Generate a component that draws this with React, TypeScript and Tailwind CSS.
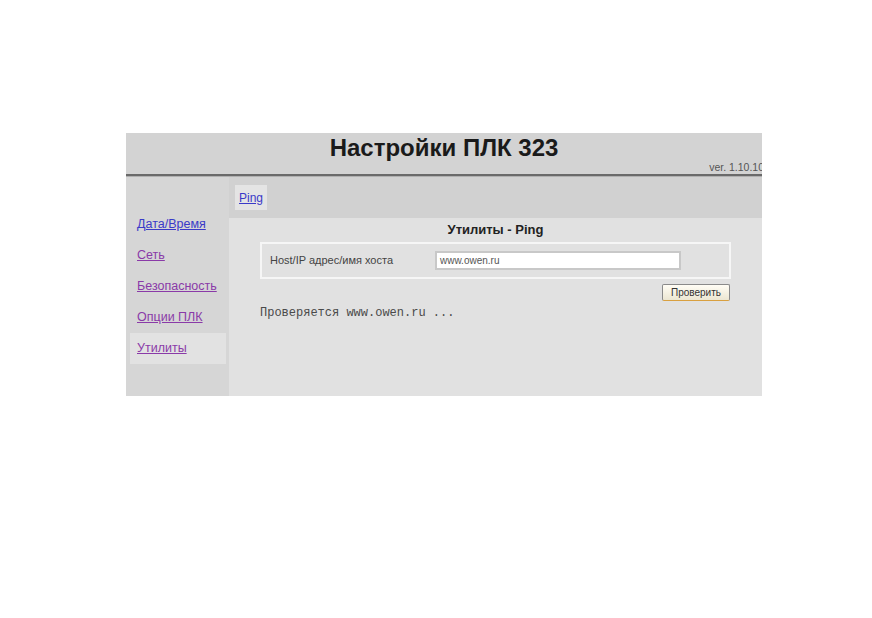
export default function App() {
  const links = [
    { label: "Дата/Время", color: "text-[#3a3ac8]" },
    { label: "Сеть", color: "text-[#8a3aa8]" },
    { label: "Безопасность", color: "text-[#8a3aa8]" },
    { label: "Опции ПЛК", color: "text-[#8a3aa8]" },
    { label: "Утилиты", color: "text-[#8a3aa8]", active: true },
  ];

  return (
    <div className="min-h-[618px] w-[872px] bg-white pt-[133px] pl-[126px] font-['Liberation_Sans',Arial,sans-serif]">
      <div className="flex w-[636px] flex-col">
        {/* header */}
        <div className="relative h-[41px] overflow-hidden bg-[#d3d3d3]">
          <div className="pt-[1px] text-center text-[24px] font-bold leading-[28px] text-[#1a1a1a]">
            Настройки ПЛК 323
          </div>
          <div className="absolute right-[-2px] bottom-[1px] text-[10.5px] leading-[12px] text-[#555]">
            ver. 1.10.10
          </div>
        </div>
        <div className="h-[2px] bg-[#6a6a6a]" />
        <div className="h-[1px] bg-[#b0b0b0]" />

        <div className="flex h-[219px]">
          {/* sidebar */}
          <div className="flex w-[103px] flex-col bg-[#d6d6d6] pt-[32px]">
            {links.map((l) => (
              <div
                key={l.label}
                className={`ml-[4px] mr-[3px] flex h-[31px] items-center pl-[7px] text-[12.5px] ${l.active ? "bg-[#e2e2e2]" : ""}`}
              >
                <a className={`${l.color} underline`} href="#">
                  {l.label}
                </a>
              </div>
            ))}
          </div>

          {/* main */}
          <div className="flex flex-1 flex-col">
            <div className="flex h-[41px] items-start bg-[#d1d1d1] pt-[8px] pl-[6px]">
              <div className="flex h-[25px] items-center bg-[#e4e4e4] px-[4px] text-[12px]">
                <a className="text-[#3a3ac8] underline" href="#">
                  Ping
                </a>
              </div>
            </div>
            <div className="flex flex-1 flex-col bg-[#e1e1e1] px-[31px]">
              <div className="pt-[4px] text-center text-[13px] font-bold leading-[16px] text-[#222]">
                Утилиты - Ping
              </div>
              <div className="mt-[4px] flex h-[37px] items-center border-2 border-[#f6f6f6] pl-[8px]">
                <span className="w-[165px] text-[11px] text-[#444]">Host/IP адрес/имя хоста</span>
                <div className="flex h-[19px] w-[246px] items-center border-2 border-[#c8c8c8] bg-white pl-[3px] text-[10px] text-[#555]">
                  www.owen.ru
                </div>
              </div>
              <div className="mt-[5px] mr-[1px] flex justify-end">
                <button className="h-[17px] w-[68px] rounded-[2px] border border-[#8a8a8a] border-b-[#d9a040] bg-gradient-to-b from-[#fffdf5] to-[#ece6d2] text-[10px] leading-[14px] text-[#333]">
                  Проверить
                </button>
              </div>
              <div className="mt-[5px] font-['Liberation_Mono','Courier_New',monospace] text-[12px] leading-[14px] text-[#4a4a4a]">
                Проверяется www.owen.ru ...
              </div>
            </div>
          </div>
        </div>
      </div>
    </div>
  );
}
